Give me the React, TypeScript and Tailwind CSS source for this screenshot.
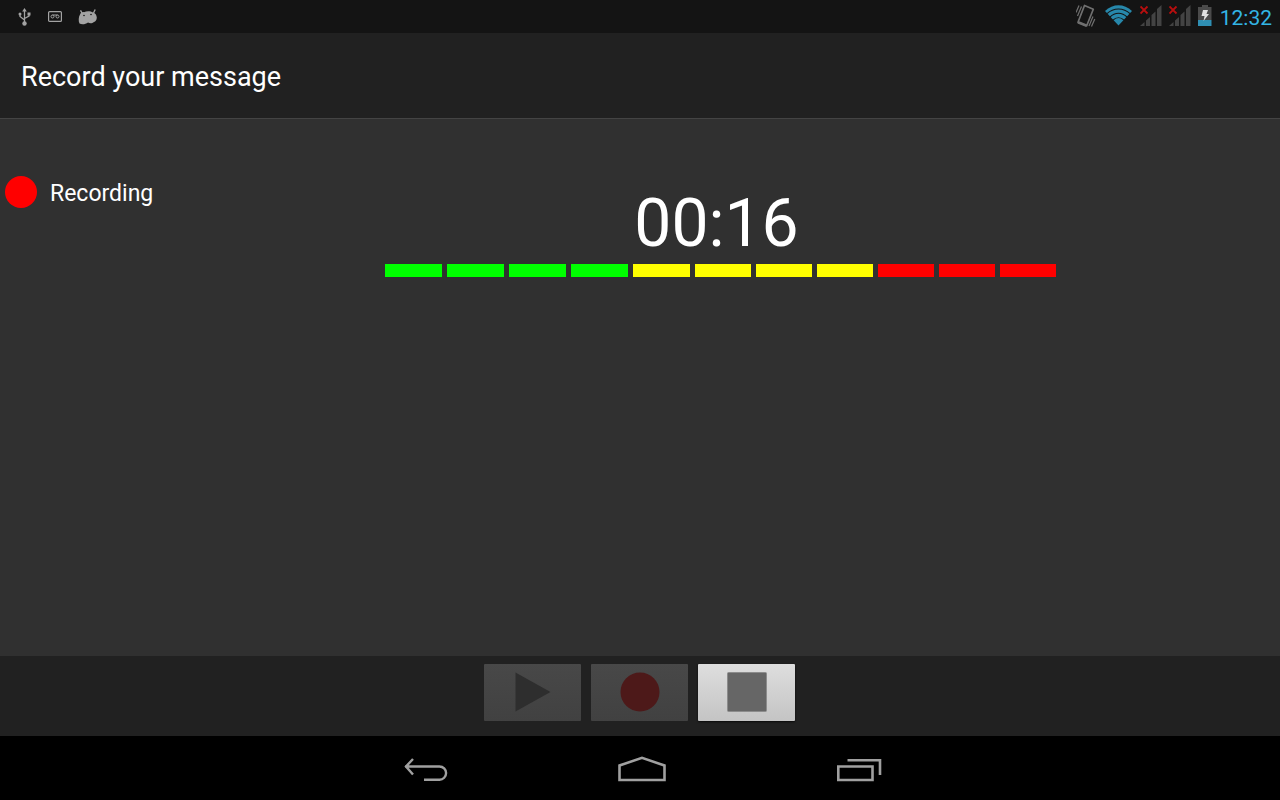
import React, { useState } from 'react';

type RecorderState = 'idle' | 'recording' | 'playing';

// Level meter, one entry per segment
const levels = [
  { color: 'bg-[#00ff00]', width: 'w-[57px]' },
  { color: 'bg-[#00ff00]', width: 'w-[57px]' },
  { color: 'bg-[#00ff00]', width: 'w-[57px]' },
  { color: 'bg-[#00ff00]', width: 'w-[57px]' },
  { color: 'bg-[#ffff00]', width: 'w-[57px]' },
  { color: 'bg-[#ffff00]', width: 'w-[56px]' },
  { color: 'bg-[#ffff00]', width: 'w-[56px]' },
  { color: 'bg-[#ffff00]', width: 'w-[56px]' },
  { color: 'bg-[#ff0000]', width: 'w-[56px]' },
  { color: 'bg-[#ff0000]', width: 'w-[56px]' },
  { color: 'bg-[#ff0000]', width: 'w-[56px]' },
];

const UsbIcon = () => (
  <svg width="14" height="18" viewBox="0 0 14 18" fill="none" stroke="#a3a3a3" strokeWidth="1.3">
    <path d="M6.500 3v12M2 6v2.500L6.500 12M11 6v2L6.500 10.500" />
    <path d="M6.500 0l2.300 3.500H4.200z" fill="#a3a3a3" stroke="none" />
    <circle cx="6.500" cy="15.500" r="2.200" fill="#a3a3a3" stroke="none" />
    <circle cx="2" cy="6" r="1.500" fill="#a3a3a3" stroke="none" />
    <rect x="9.500" y="4.500" width="3" height="3" fill="#a3a3a3" stroke="none" />
  </svg>
);

const CassetteIcon = () => (
  <svg width="14" height="11" viewBox="0 0 14 11" fill="none" stroke="#a3a3a3">
    <rect x="0.600" y="0.600" width="12.800" height="9.800" rx="1" strokeWidth="1.200" />
    <circle cx="4.500" cy="5.500" r="1.500" />
    <circle cx="9.500" cy="5.500" r="1.500" />
    <path d="M4.500 4h5" />
  </svg>
);

const DroidIcon = () => (
  <svg width="20" height="16" viewBox="0 0 20 16">
    <path
      d="M1.500 14.500C0.300 12 0.500 8 2 5.500C3 3.300 4.500 2.800 6 3.200C8.500 2 12.500 2 15 3.500C17.500 4 18.500 6 18.800 8.500C18.800 11 17.500 12.500 16 13C14 14.800 11.500 14.500 10 13.500C7.500 15.500 3.500 15.800 1.500 14.500z"
      fill="#a3a3a3"
    />
    <path d="M4 4L2.500 1.300M15.500 4L17.200 0.500" stroke="#a3a3a3" strokeWidth="1.400" />
    <circle cx="6" cy="6.500" r="0.800" fill="#141414" />
    <circle cx="13" cy="5.500" r="0.800" fill="#141414" />
  </svg>
);

const VibrateIcon = () => (
  <svg width="22" height="24" viewBox="0 0 22 24" fill="none" stroke="#707070">
    <path d="M8.500 1.500L17.300 5.300L10.700 21.800L2 18.200z" strokeWidth="1.700" strokeLinejoin="round" />
    <path d="M2 18.200L10.700 21.800" strokeWidth="2.600" />
    <path d="M0 8.500L3 1.500M1.500 12L5.500 2.500M13 22L17 12.500M15.500 22.500L18.800 15" strokeWidth="1.200" />
  </svg>
);

const WifiIcon = () => (
  <svg width="28" height="21" viewBox="0 0 28 21">
    <path d="M0 6C8-1.700 19-1.700 27 6L13.500 20.500z" fill="#2788ab" />
    <path
      d="M2 8.700C8.500 2.500 18.500 2.500 25 8.700M5 12C10 7 17 7 22 12M8 15.200C11.300 12 15.700 12 19 15.200"
      fill="none"
      stroke="#141414"
      strokeWidth="1.100"
    />
  </svg>
);

const SignalIcon = () => (
  <svg width="22" height="21" viewBox="0 0 22 21">
    <path d="M0 21L4.500 17v4zM6 15.500l4-3.500v9H6zM11.500 10L15.500 6.500V21h-4zM17 4L21.500 0v21H17z" fill="#434343" />
    <path d="M0.500 1.500l7 7M7.500 1.500l-7 7" stroke="#b80e0e" strokeWidth="1.800" />
  </svg>
);

const BatteryIcon = () => (
  <svg width="14" height="21" viewBox="0 0 14 21">
    <path d="M4 0h6v2h3.500v13H0V2h4z" fill="#4b4b4b" />
    <rect y="15" width="13.500" height="6" fill="#2f8fb3" />
    <path d="M5 5h5L8.500 9H11L5.500 16L6.500 11H3.500z" fill="#e2e2e2" />
  </svg>
);

interface ControlButtonProps {
  label: string;
  disabled: boolean;
  onClick: () => void;
  children: React.ReactNode;
}

const ControlButton: React.FC<ControlButtonProps> = ({ label, disabled, onClick, children }) => (
  <button
    aria-label={label}
    disabled={disabled}
    onClick={onClick}
    className={`flex h-[57px] w-[97px] items-center justify-center rounded-[1px] pb-px ${
      disabled
        ? 'bg-linear-to-b from-[#484848] to-[#414141]'
        : 'bg-linear-to-b from-[#dedede] to-[#c4c4c4] shadow-[0_1px_2px_rgba(0,0,0,0.7)]'
    }`}
  >
    {children}
  </button>
);

const App: React.FC = () => {
  const [state, setState] = useState<RecorderState>('recording');
  const busy = state !== 'idle';

  return (
    <div className="flex min-h-screen flex-col bg-[#303030] font-['Roboto',sans-serif] text-white">
      {/* Status bar */}
      <div className="flex h-[33px] items-center justify-between bg-[#141414] pr-2 pl-[18px]">
        <div className="flex items-center gap-4">
          <UsbIcon />
          <CassetteIcon />
          <DroidIcon />
        </div>
        <div className="flex items-center gap-2">
          <div className="flex items-center gap-[7px] pb-0.5">
            <VibrateIcon />
            <WifiIcon />
            <SignalIcon />
            <SignalIcon />
            <BatteryIcon />
          </div>
          <span className="pt-0.5 text-[21px] leading-8 text-[#33b5e5]">12:32</span>
        </div>
      </div>

      {/* Title */}
      <header className="flex h-[86px] items-center border-b border-[#444444] bg-[#212121] px-[21px] pt-0.5">
        <h1 className="text-[27px] leading-8">Record your message</h1>
      </header>

      <main className="flex flex-1 items-start pt-[57px]">
        <div className="flex w-[161px] items-start gap-[13px] pl-[5px]">
          <span className="size-8 rounded-full bg-[#ff0000]" />
          <span className="pt-0.5 text-[23px] leading-8">Recording</span>
        </div>
        <div className="flex flex-1 flex-col items-center pt-2">
          <time className="pr-2 text-[66px] leading-[80px]">00:16</time>
          <div className="flex gap-[5px]">
            {levels.map((level, i) => (
              <div key={i} className={`h-[13px] ${level.width} ${level.color}`} />
            ))}
          </div>
        </div>
      </main>

      {/* Recorder controls */}
      <div className="flex h-20 items-start justify-center gap-[10px] bg-[#212121] pt-2 pr-px">
        <ControlButton label="Play" disabled={busy} onClick={() => setState('playing')}>
          <svg width="40" height="40" viewBox="0 0 40 40">
            <path d="M2.500 0.500L37.500 20L2.500 39.500z" fill="#2e2e2e" />
          </svg>
        </ControlButton>
        <ControlButton label="Record" disabled={busy} onClick={() => setState('recording')}>
          <svg width="40" height="40" viewBox="0 0 40 40">
            <circle cx="20" cy="20" r="19.500" fill="#4d1919" />
          </svg>
        </ControlButton>
        <ControlButton label="Stop" disabled={!busy} onClick={() => setState('idle')}>
          <svg width="40" height="40" viewBox="0 0 40 40">
            <rect x="0.500" y="0.500" width="39" height="39" rx="1" fill="#666666" stroke="#8c8c8c" />
          </svg>
        </ControlButton>
      </div>

      {/* System navigation */}
      <nav className="flex h-16 items-center justify-center bg-black pt-2">
        <button aria-label="Back" className="flex w-[217px] justify-center">
          <svg width="52" height="32" viewBox="0 0 52 32" fill="none" stroke="#a0a0a0" strokeWidth="2.400">
            <path d="M8 10.500H42.500a6.600 6.600 0 0 1 0 13.200H27M16 3L9 10.500L16 18.500" />
          </svg>
        </button>
        <button aria-label="Home" className="flex w-[217px] justify-center">
          <svg width="52" height="32" viewBox="0 0 52 32" fill="none" stroke="#a0a0a0" strokeWidth="2.600">
            <path d="M5.500 24V9.500L28 1.800L50.500 9.500V24z" />
          </svg>
        </button>
        <button aria-label="Recent apps" className="flex w-[217px] justify-center">
          <svg width="52" height="32" viewBox="0 0 52 32" fill="none" stroke="#a0a0a0" strokeWidth="2.600">
            <path d="M7.300 10.500H41.500V24H7.300zM16.500 4.300H49V19" />
          </svg>
        </button>
      </nav>
    </div>
  );
};

export default App;
